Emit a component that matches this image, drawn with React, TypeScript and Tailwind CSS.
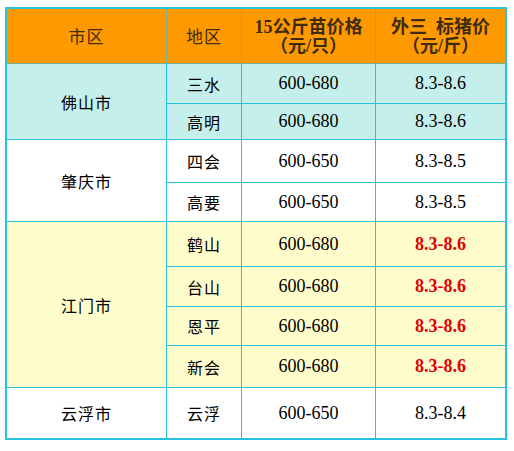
const rows = [
  { city: "佛山市", bg: "bg-[#c4efeb]", items: [
    { area: "三水", seed: "600-680", pig: "8.3-8.6", h: "h-[40px]" },
    { area: "高明", seed: "600-680", pig: "8.3-8.6", h: "h-[36px]" },
  ] },
  { city: "肇庆市", bg: "bg-white", items: [
    { area: "四会", seed: "600-650", pig: "8.3-8.5", h: "h-[43px]" },
    { area: "高要", seed: "600-650", pig: "8.3-8.5", h: "h-[39px]" },
  ] },
  { city: "江门市", bg: "bg-[#fffccc]", red: true, items: [
    { area: "鹤山", seed: "600-680", pig: "8.3-8.6", h: "h-[45px]" },
    { area: "台山", seed: "600-680", pig: "8.3-8.6", h: "h-[40px]" },
    { area: "恩平", seed: "600-680", pig: "8.3-8.6", h: "h-[39px]" },
    { area: "新会", seed: "600-680", pig: "8.3-8.6", h: "h-[42px]" },
  ] },
  { city: "云浮市", bg: "bg-white", last: true, items: [
    { area: "云浮", seed: "600-650", pig: "8.3-8.4", h: "h-[50px]" },
  ] },
];

const cjk = "font-['Noto_Sans_CJK_SC',sans-serif]";
const serif = "font-['Liberation_Serif','Noto_Sans_CJK_SC',serif]";

export default function App() {
  return (
    <div className="w-[514px] h-[451px] bg-white pt-[7px] pl-[5px]">
      <table className="table-fixed border-separate border-spacing-0 border-2 border-[#26c3da] text-center text-black">
        <colgroup>
          <col className="w-[160px]" />
          <col className="w-[75px]" />
          <col className="w-[134px]" />
          <col className="w-[129px]" />
        </colgroup>
        <thead>
          <tr className="h-[55px] bg-[#ff9900] text-[#3d2c10]">
            <th className={`border-r border-b border-[#72b294] ${cjk} font-normal text-[17px] tracking-[1px]`}>市区</th>
            <th className={`border-r border-b border-[#72b294] ${cjk} font-normal text-[17px] tracking-[1px]`}>地区</th>
            <th className={`border-r border-b border-[#72b294] ${serif} font-bold text-[18px] leading-[19px] pt-[2px]`}>
              15公斤苗价格<br />（元/只）
            </th>
            <th className={`border-b border-[#72b294] ${serif} font-bold text-[18px] leading-[19px] pt-[2px]`}>
              外三&nbsp; 标猪价<br />（元/斤）
            </th>
          </tr>
        </thead>
        <tbody>
          {rows.map((g) =>
            g.items.map((it, i) => {
              const bb = g.last && i === g.items.length - 1 ? "" : "border-b";
              return (
                <tr key={g.city + it.area} className={`${it.h} ${g.bg}`}>
                  {i === 0 && (
                    <td rowSpan={g.items.length} className={`border-r ${g.last ? "" : "border-b"} border-[#26c3da] ${cjk} text-[16px] tracking-[1px]`}>
                      {g.city}
                    </td>
                  )}
                  <td className={`border-r ${bb} border-[#26c3da] ${cjk} text-[16px] tracking-[1px]`}>{it.area}</td>
                  <td className={`border-r ${bb} border-[#26c3da] ${serif} text-[18px]`}>{it.seed}</td>
                  <td className={`${bb} border-[#26c3da] ${serif} text-[18px] ${g.red ? "font-bold text-[#e00000]" : ""}`}>{it.pig}</td>
                </tr>
              );
            })
          )}
        </tbody>
      </table>
    </div>
  );
}
